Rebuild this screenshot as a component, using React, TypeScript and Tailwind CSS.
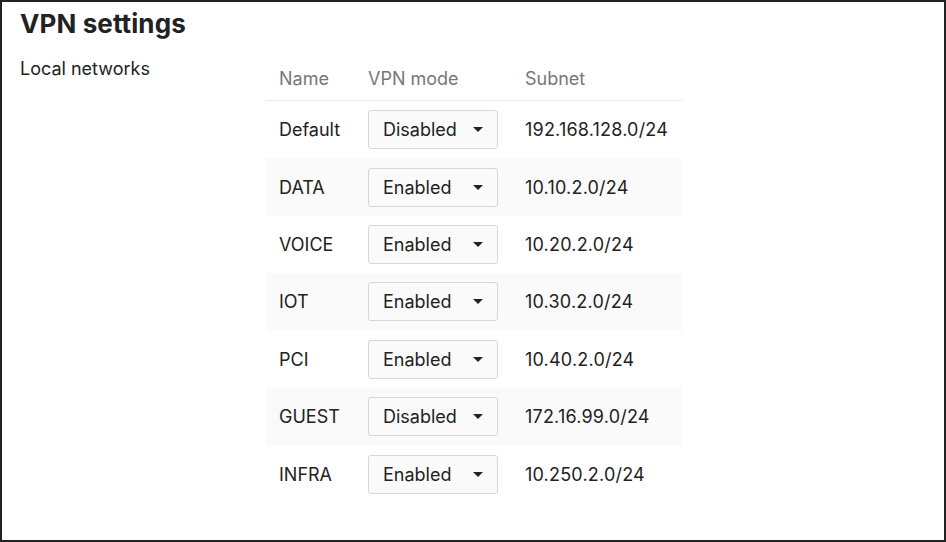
const networks = [
  { name: "Default", mode: "Disabled", subnet: "192.168.128.0/24" },
  { name: "DATA", mode: "Enabled", subnet: "10.10.2.0/24" },
  { name: "VOICE", mode: "Enabled", subnet: "10.20.2.0/24" },
  { name: "IOT", mode: "Enabled", subnet: "10.30.2.0/24" },
  { name: "PCI", mode: "Enabled", subnet: "10.40.2.0/24" },
  { name: "GUEST", mode: "Disabled", subnet: "172.16.99.0/24" },
  { name: "INFRA", mode: "Enabled", subnet: "10.250.2.0/24" },
];

const ModeSelect = ({ value }: { value: string }) => (
  <button className="flex h-[39px] w-[130px] items-center justify-between rounded-[3px] border border-[#d6d6d6] bg-[#fafafa] pl-[14px] pr-[14px] text-[18px] text-[#222]">
    <span>{value}</span>
    <svg width="10" height="5" viewBox="0 0 10 5">
      <path d="M0 0h10L5 5z" fill="#222" />
    </svg>
  </button>
);

export default function App() {
  return (
    <div
      className="h-[542px] w-[946px] overflow-hidden border-2 border-[#222] bg-white text-[#222]"
      style={{ fontFamily: "Inter, 'Noto Sans', sans-serif" }}
    >
      <h1 className="ml-[18px] mt-[6px] text-[26px] font-bold leading-[32px] tracking-[0.1px]">VPN settings</h1>
      <div className="mt-[17px] flex">
        <div className="ml-[18px] w-[246px] shrink-0 text-[18px] leading-[24px]">Local networks</div>
        <div className="w-[416px] shrink-0">
          <div className="flex h-[44px] items-center border-b border-[#ececec] text-[18px] text-[#777]">
            <div className="w-[89px] shrink-0 pl-[13px]">Name</div>
            <div className="w-[157px] shrink-0 pl-[13px]">VPN mode</div>
            <div className="pl-[13px]">Subnet</div>
          </div>
          {networks.map((n, i) => (
            <div
              key={n.name}
              className={`flex h-[57.4px] items-center text-[18px] ${i % 2 === 1 ? "bg-[#fafafa]" : ""}`}
            >
              <div className="w-[89px] shrink-0 pl-[13px]">{n.name}</div>
              <div className="w-[157px] shrink-0 pl-[13px]">
                <ModeSelect value={n.mode} />
              </div>
              <div className="whitespace-nowrap pl-[13px] tracking-[0.2px]">{n.subnet}</div>
            </div>
          ))}
        </div>
      </div>
    </div>
  );
}
